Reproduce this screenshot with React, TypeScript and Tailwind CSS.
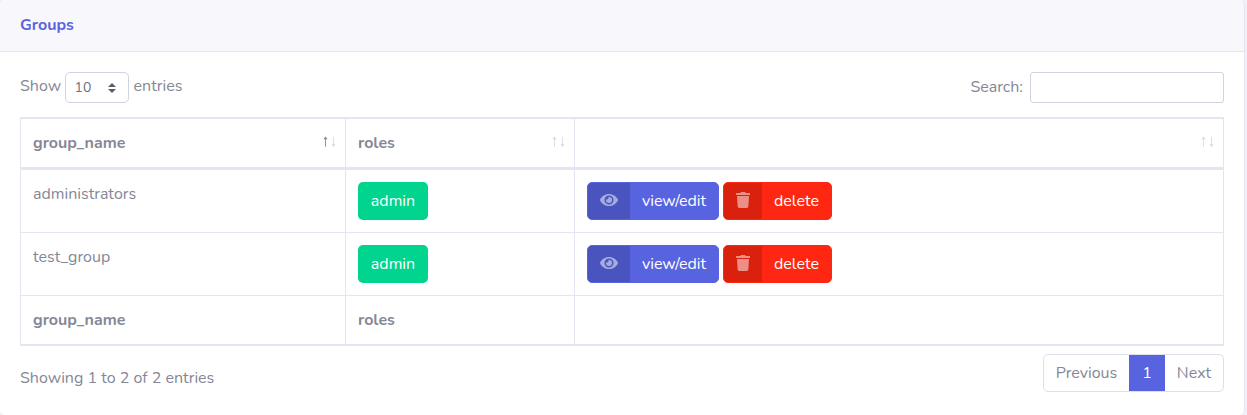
import { FaEye, FaTrash } from "react-icons/fa";

const cell = "border-r border-[#e3e6f0] px-3 pt-3";
const columns = "grid grid-cols-[325px_229px_649px]";

function SortArrows({ ascending = false }: { ascending?: boolean }) {
  return (
    <svg width="14" height="12" viewBox="0 0 14 12" fill="#858796" className="mt-[5px] -mr-[3px]">
      <path d="M3.5 .5L5.6 3.2H3.9V10.8H3V3.2H1.4Z" fillOpacity={ascending ? 1 : 0.3} />
      <path d="M11.5 11L9.4 8.3H11V.8H11.9V8.3H13.6Z" fillOpacity="0.3" />
    </svg>
  );
}

function GroupRow({ name, role }: { name: string; role: string }) {
  return (
    <div className={`${columns} h-[63px] border-b border-[#e3e6f0]`}>
      <div className={cell}>{name}</div>
      <div className={cell}>
        <span className="inline-block h-[38px] w-[70px] rounded-[5px] bg-[#00d48e] text-center leading-[38px] text-white">{role}</span>
      </div>
      <div className={`${cell} flex gap-1`}>
        <button className="flex h-[38px] w-[132px] overflow-hidden rounded-[5px] border border-[#5863e0] bg-[#5863e0] text-white">
          <span className="flex h-full w-[42px] items-center justify-center bg-black/15 text-white/50"><FaEye size={18} className="-mt-[2px]" /></span>
          <span className="flex-1 text-center leading-9">view/edit</span>
        </button>
        <button className="flex h-[38px] w-[109px] overflow-hidden rounded-[5px] border border-[#ff2711] bg-[#ff2711] text-white">
          <span className="flex h-full w-[38px] items-center justify-center bg-black/15 text-white/50"><FaTrash size={16} className="-mt-[2px]" /></span>
          <span className="flex-1 text-center leading-9">delete</span>
        </button>
      </div>
    </div>
  );
}

export default function App() {
  return (
    <div className="h-[415px] w-[1247px] overflow-hidden bg-[#f0f0f6] font-['Nunito','Lato',sans-serif] text-base text-[#858796]">
      <div className="h-[415px] w-[1245px] overflow-hidden rounded-[5px] border-r border-[#e3e6f0] bg-white">
        <header className="h-[52px] border-b border-[#e3e6f0] bg-[#f8f8fc] px-5 pt-[13px] font-bold text-[#5863e0]">Groups</header>
        <main className="px-5 pt-5">
          <div className="flex h-[45px] justify-between">
            <div className="flex">
              <span className="w-[45px] pt-[2px]">Show</span>
              <button className="flex h-[31px] w-16 items-center justify-between rounded-[5px] border border-[#d1d3e2] pr-3 pl-[8.5px] text-sm text-[#6e707e]">
                10
                <svg width="8" height="10" viewBox="0 0 8 10" fill="#5a5c69"><path d="M0 4L4 0L8 4ZM0 6L4 10L8 6Z" /></svg>
              </button>
              <span className="pt-[2px] pl-[4.6px]">entries</span>
            </div>
            <label className="flex">
              <span className="pt-[3px] pr-[7px]">Search:</span>
              <input className="h-[31px] w-[194px] rounded-[3px] border border-[#d1d3e2] px-2" />
            </label>
          </div>
          <section className="w-[1204px] border-y-2 border-l border-[#e3e6f0]">
            <div className={`${columns} h-[51px] border-b-3 border-[#e3e6f0] font-bold`}>
              <div className={`${cell} flex justify-between`}><span>group_name</span><SortArrows ascending /></div>
              <div className={`${cell} flex justify-between`}><span>roles</span><SortArrows /></div>
              <div className={`${cell} flex justify-end`}><SortArrows /></div>
            </div>
            <GroupRow name="administrators" role="admin" />
            <GroupRow name="test_group" role="admin" />
            <div className={`${columns} h-12 font-bold`}>
              <div className={cell}>group_name</div>
              <div className={cell}>roles</div>
              <div className={cell} />
            </div>
          </section>
          <footer className="flex justify-between pt-2">
            <span className="pt-3">Showing 1 to 2 of 2 entries</span>
            <nav className="flex h-[38px] w-[181px] overflow-hidden rounded-[5px] border border-[#dddfeb] text-center leading-9">
              <span className="w-[85px]">Previous</span>
              <span className="-my-px w-9 bg-[#5863e0] leading-[38px] text-white">1</span>
              <span className="flex-1">Next</span>
            </nav>
          </footer>
        </main>
      </div>
    </div>
  );
}
